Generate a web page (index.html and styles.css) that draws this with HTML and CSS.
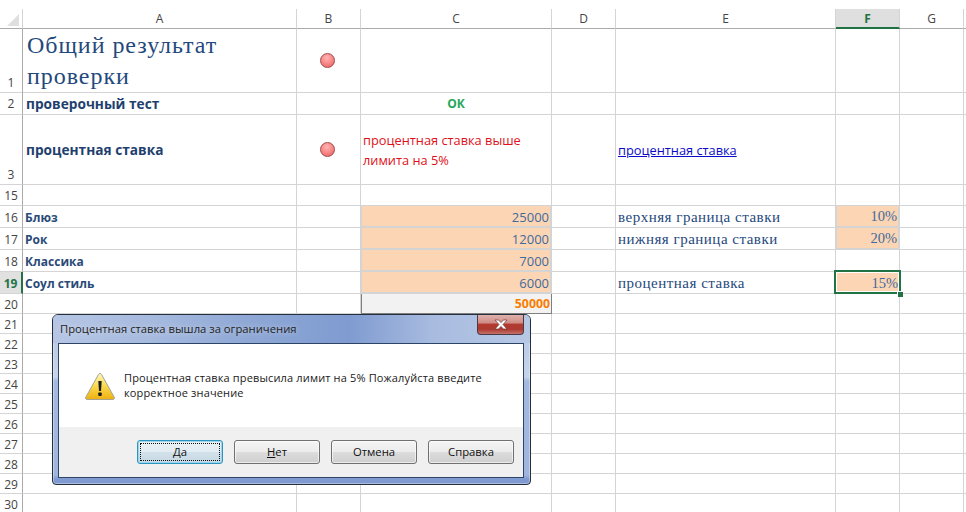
FILE: index.html
```html
<!DOCTYPE html>
<html lang="ru">
<head>
<meta charset="utf-8">
<title>Процентная ставка</title>
<link rel="stylesheet" href="styles.css">
</head>
<body>
<div class="sheet">
  <div class="topband"></div>
  <div class="row r-head">
    <div class="corner"><span class="tri"></span></div>
    <div class="ch">A</div><div class="ch">B</div><div class="ch">C</div><div class="ch">D</div><div class="ch">E</div><div class="ch ch-sel">F</div><div class="ch">G</div><div class="ch"></div>
  </div>
  <div class="row r63">
    <div class="rh rh-bottom">1</div>
    <div class="c title">Общий результат проверки</div>
    <div class="c mid"><span class="ball"></span></div>
    <div class="c"></div><div class="c"></div><div class="c"></div><div class="c"></div><div class="c"></div><div class="c"></div>
  </div>
  <div class="row r23">
    <div class="rh">2</div>
    <div class="c head-b">проверочный тест</div>
    <div class="c"></div>
    <div class="c ok">ОК</div>
    <div class="c"></div><div class="c"></div><div class="c"></div><div class="c"></div><div class="c"></div>
  </div>
  <div class="row r70">
    <div class="rh rh-bottom">3</div>
    <div class="c head-b">процентная ставка</div>
    <div class="c mid"><span class="ball"></span></div>
    <div class="c warn">процентная ставка выше<br>лимита на 5%</div>
    <div class="c"></div>
    <div class="c linkcell"><a class="link" href="#">процентная ставка</a></div>
    <div class="c"></div><div class="c"></div><div class="c"></div>
  </div>
  <div class="row r21">
    <div class="rh">15</div>
    <div class="c"></div><div class="c"></div><div class="c"></div><div class="c"></div><div class="c"></div><div class="c"></div><div class="c"></div><div class="c"></div>
  </div>
  <div class="row r22">
    <div class="rh">16</div>
    <div class="c name">Блюз</div><div class="c"></div><div class="c input num">25000</div><div class="c"></div>
    <div class="c serif">верхняя граница ставки</div><div class="c input pct">10%</div><div class="c"></div><div class="c"></div>
  </div>
  <div class="row r22">
    <div class="rh">17</div>
    <div class="c name">Рок</div><div class="c"></div><div class="c input num">12000</div><div class="c"></div>
    <div class="c serif">нижняя граница ставки</div><div class="c input pct">20%</div><div class="c"></div><div class="c"></div>
  </div>
  <div class="row r22">
    <div class="rh">18</div>
    <div class="c name">Классика</div><div class="c"></div><div class="c input num">7000</div><div class="c"></div>
    <div class="c"></div><div class="c"></div><div class="c"></div><div class="c"></div>
  </div>
  <div class="row r22">
    <div class="rh rh-sel">19</div>
    <div class="c name">Соул стиль</div><div class="c"></div><div class="c input num">6000</div><div class="c"></div>
    <div class="c serif">процентная ставка</div><div class="c active pct"><span class="handle"></span>15%</div><div class="c"></div><div class="c"></div>
  </div>
  <div class="row r20">
    <div class="rh">20</div>
    <div class="c"></div><div class="c"></div><div class="c total">50000</div><div class="c"></div><div class="c"></div><div class="c"></div><div class="c"></div><div class="c"></div>
  </div>
  <div class="row r20"><div class="rh">21</div><div class="c"></div><div class="c"></div><div class="c"></div><div class="c"></div><div class="c"></div><div class="c"></div><div class="c"></div><div class="c"></div></div>
  <div class="row r20"><div class="rh">22</div><div class="c"></div><div class="c"></div><div class="c"></div><div class="c"></div><div class="c"></div><div class="c"></div><div class="c"></div><div class="c"></div></div>
  <div class="row r20"><div class="rh">23</div><div class="c"></div><div class="c"></div><div class="c"></div><div class="c"></div><div class="c"></div><div class="c"></div><div class="c"></div><div class="c"></div></div>
  <div class="row r20"><div class="rh">24</div><div class="c"></div><div class="c"></div><div class="c"></div><div class="c"></div><div class="c"></div><div class="c"></div><div class="c"></div><div class="c"></div></div>
  <div class="row r20"><div class="rh">25</div><div class="c"></div><div class="c"></div><div class="c"></div><div class="c"></div><div class="c"></div><div class="c"></div><div class="c"></div><div class="c"></div></div>
  <div class="row r20"><div class="rh">26</div><div class="c"></div><div class="c"></div><div class="c"></div><div class="c"></div><div class="c"></div><div class="c"></div><div class="c"></div><div class="c"></div></div>
  <div class="row r20"><div class="rh">27</div><div class="c"></div><div class="c"></div><div class="c"></div><div class="c"></div><div class="c"></div><div class="c"></div><div class="c"></div><div class="c"></div></div>
  <div class="row r20"><div class="rh">28</div><div class="c"></div><div class="c"></div><div class="c"></div><div class="c"></div><div class="c"></div><div class="c"></div><div class="c"></div><div class="c"></div></div>
  <div class="row r20"><div class="rh">29</div><div class="c"></div><div class="c"></div><div class="c"></div><div class="c"></div><div class="c"></div><div class="c"></div><div class="c"></div><div class="c"></div></div>
  <div class="row r20"><div class="rh">30</div><div class="c"></div><div class="c"></div><div class="c"></div><div class="c"></div><div class="c"></div><div class="c"></div><div class="c"></div><div class="c"></div></div>
</div>

<div class="dialog">
  <div class="titlebar">
    <span class="dlg-title">Процентная ставка вышла за ограничения</span>
    <button class="close" type="button" aria-label="Закрыть">
      <svg width="16" height="11" viewBox="0 0 16 11"><path d="M2 1h3.6L8 3.6 10.4 1H14l-4 4.500 4 4.500h-3.600L8 7.400 5.600 10H2l4-4.500z" fill="#fff" stroke="#6b3a38" stroke-width=".7"/></svg>
    </button>
  </div>
  <div class="content">
    <div class="message">
      <svg class="warn-icon" width="32" height="29" viewBox="0 0 32 29">
        <defs>
          <linearGradient id="wy" x1="0" y1="0" x2="0" y2="1">
            <stop offset="0" stop-color="#fff6c0"/>
            <stop offset=".45" stop-color="#fbdc50"/>
            <stop offset="1" stop-color="#eeb010"/>
          </linearGradient>
        </defs>
        <path d="M16 1.500c.7 0 1.200.4 1.600 1.100l12.600 22.600c.6 1.200 0 2.300-1.300 2.300H3.100c-1.300 0-1.900-1.100-1.300-2.300L14.400 2.600c.4-.7.9-1.100 1.600-1.100z" fill="url(#wy)" stroke="#a3a398" stroke-width="1"/>
        <path d="M14.300 9h3.400l-.7 10h-2z" fill="#1c1c1c"/>
        <rect x="14.300" y="20.500" width="3.400" height="3.500" rx=".8" fill="#1c1c1c"/>
      </svg>
      <p class="msg-text">Процентная ставка превысила лимит на 5% Пожалуйста введите<br>корректное значение</p>
    </div>
    <div class="footer">
      <button class="btn btn-default" type="button"><span class="focus"><u>Д</u>а</span></button>
      <button class="btn" type="button"><span><u>Н</u>ет</span></button>
      <button class="btn" type="button"><span>Отмена</span></button>
      <button class="btn" type="button"><span>Справка</span></button>
    </div>
  </div>
</div>
</body>
</html>
```

FILE: styles.css
```css
* { box-sizing: border-box; }
html, body { margin: 0; padding: 0; background: #fff; overflow: hidden; height: 512px; }
body { position: relative; width: 966px; font-family: "Open Sans", sans-serif; }

.sheet { width: 966px; }
.topband { height: 9px; }

.row {
  display: grid;
  grid-template-columns: 23px 274px 64px 191px 64px 220px 64px 64px 3px;
}
.r-head { height: 20px; }
.r63 { height: 63px; }
.r23 { height: 23px; }
.r70 { height: 70px; }
.r21 { height: 21px; }
.r22 { height: 22px; }
.r20 { height: 20px; }

/* headers */
.corner { border-right: 1px solid #d4d4d4; border-bottom: 1px solid #ababab; position: relative; }
.tri {
  display: block;
  margin: 5px 0 0 7px;
  width: 0; height: 0;
  border-style: solid;
  border-width: 0 0 12px 12px;
  border-color: transparent transparent #dfdfdf transparent;
}
.ch {
  display: flex; align-items: center; justify-content: center;
  border-right: 1px solid #d4d4d4;
  border-bottom: 1px solid #ababab;
  font: 12px "Open Sans", sans-serif;
  color: #444;
}
.ch-sel {
  background: #dfdfdf;
  color: #217346;
  font-weight: 700;
  border-bottom: 2px solid #217346;
}
.rh {
  display: flex; align-items: center; justify-content: center;
  padding-top: 1px;
  border-right: 1px solid #ababab;
  border-bottom: 1px solid #d4d4d4;
  font: 12px "Open Sans", sans-serif;
  color: #444;
}
.rh-bottom { align-items: flex-end; padding: 0 0 1px; }
.rh-sel {
  background: #e1e1e1;
  color: #217346;
  font-weight: 700;
  border-right: 2px solid #217346;
}

/* cells */
.c {
  display: flex; align-items: center;
  position: relative;
  border-right: 1px solid #d4d4d4;
  border-bottom: 1px solid #d4d4d4;
  padding: 0 2px;
  white-space: nowrap;
  min-width: 0;
}
.mid { justify-content: center; padding: 0 2px 1px 0; }
.title {
  display: block;
  white-space: normal;
  padding: 1px 40px 0 4px;
  font: 24px/31px "Liberation Serif", serif;
  letter-spacing: .95px;
  color: #1f497d;
}
.head-b {
  padding-left: 3px;
  font: 700 13.700px "Open Sans", sans-serif;
  color: #1f3f6e;
}
.r23 .head-b { padding-top: 1px; }
.ok {
  justify-content: center;
  font: 700 12px "Open Sans", sans-serif;
  color: #1fa65a;
}
.warn {
  padding-left: 2px;
  font: 12.800px/20px "Open Sans", sans-serif;
  color: #e0101a;
}
.linkcell { padding-top: 1px; }
.link {
  font: 12.800px "Open Sans", sans-serif;
  color: #0a0ac8;
}
.name {
  padding-top: 1px;
  font: 700 12px "Open Sans", sans-serif;
  color: #2a4a78;
}
.serif {
  padding-top: 1px;
  font: 15px "Liberation Serif", serif;
  letter-spacing: .5px;
  color: #1f497d;
}
.input, .active, .total { justify-content: flex-end; }
.input {
  background: #fcd5b4;
  border-left: 1px solid #d4d4d4;
  border-right: 2px solid #d4d4d4;
  border-bottom: 2px solid #d4d4d4;
}
.num {
  padding: 1px 1px 0 0;
  font: 13px "Open Sans", sans-serif;
  color: #3f6a9c;
}
.pct {
  padding: 1px 1px 0 0;
  font: 14.500px "Liberation Serif", serif;
  color: #3f6a9c;
}
.active {
  background: #fcd5b4;
  z-index: 2;
}
.active::before {
  content: "";
  position: absolute;
  top: -2px; left: -2px; right: -2px; bottom: -1px;
  border: 2px solid #217346;
  box-shadow: inset 0 0 0 1px #fff;
}
.handle {
  position: absolute;
  right: -4px; bottom: -4px;
  width: 6px; height: 6px;
  background: #217346;
  border: 1px solid #fff;
  border-width: 1px 0 0 1px;
}
.total {
  background: #f2f2f2;
  border: 1px solid #7f7f7f;
  border-top: 0;
  padding: 0 1px 0 0;
  font: 700 12.300px "Open Sans", sans-serif;
  color: #fa7d00;
}
.ball {
  width: 15px; height: 15px;
  border-radius: 50%;
  border: 1px solid #a04848;
  background: radial-gradient(circle at 45% 30%, #ffb4b4 0%, #f88888 50%, #e55c5c 100%);
}

/* dialog */
.dialog {
  position: absolute;
  left: 52px; top: 314px;
  z-index: 5;
  width: 479px; height: 171px;
  display: flex; flex-direction: column;
  padding: 0 6px 6px 5px;
  border: 1px solid #26303c;
  border-radius: 6px 6px 4px 4px;
  background:
    linear-gradient(180deg, #c4d2ea 0, #bccbe7 28px, #c6d4ea 62px, #a4b9df 66px, #9fb5dd 160px, #7f9ad0 164px, #7f9ad0 100%);
  box-shadow: inset 0 0 0 1px rgba(255,255,255,.35);
}
.titlebar {
  height: 28px;
  flex: none;
  margin: 0 -6px 0 -5px;
  padding: 0 6px 0 7px;
  display: flex; justify-content: space-between; align-items: flex-start;
  border-radius: 5px 5px 0 0;
  background: linear-gradient(90deg, #b6c6e4 0, #a5b9de 22%, #8fa8d5 40%, #7f9bd0 62%, #a9bce0 80%, #b7c8e5 100%);
}
.dlg-title {
  margin-top: 6px;
  font: 11.250px/16px "Open Sans", sans-serif;
  color: #222;
  text-shadow: 0 0 6px rgba(255,255,255,.6);
}
.close {
  width: 47px; height: 20px;
  padding: 0;
  display: flex; align-items: center; justify-content: center;
  border: 1px solid #4a3a48;
  border-top: 0;
  border-radius: 0 0 4px 4px;
  background: linear-gradient(180deg, #dfb0ac 0, #d08e88 40%, #b23a30 50%, #ad3a30 75%, #c4726a 100%);
}
.content {
  flex: 1;
  display: flex; flex-direction: column;
  border: 1px solid #2c4466;
  background: #fff;
}
.message {
  flex: 1;
  display: flex; align-items: flex-start;
  padding: 28px 0 0 25px;
}
.warn-icon { flex: none; }
.msg-text {
  margin: -2px 0 0 8px;
  font: 11px/15px "Open Sans", sans-serif;
  letter-spacing: .15px;
  color: #1a1a1a;
  white-space: nowrap;
}
.footer {
  height: 50px;
  flex: none;
  display: flex; justify-content: flex-end; gap: 11px;
  padding: 13px 9px 0 0;
  background: #f0f0f0;
}
.btn {
  width: 86px; height: 24px;
  padding: 2px;
  border: 1px solid #707070;
  border-radius: 3px;
  font: 11.300px/16px "Open Sans", sans-serif;
  color: #111;
  background: linear-gradient(180deg, #f4f4f4 0, #ececec 48%, #dcdcdc 52%, #cfcfcf 100%);
  box-shadow: inset 0 0 0 1px rgba(255,255,255,.6);
}
.btn span { display: flex; height: 100%; align-items: center; justify-content: center; }
.btn-default {
  border-color: #2d93bf;
  background: linear-gradient(180deg, #eaf1f5 0, #e2ecf2 48%, #d2e0e9 52%, #c6d9e4 100%);
  box-shadow: inset 0 0 0 1px #9ad6ee;
}
.focus { border: 1px dotted #111; }
```
